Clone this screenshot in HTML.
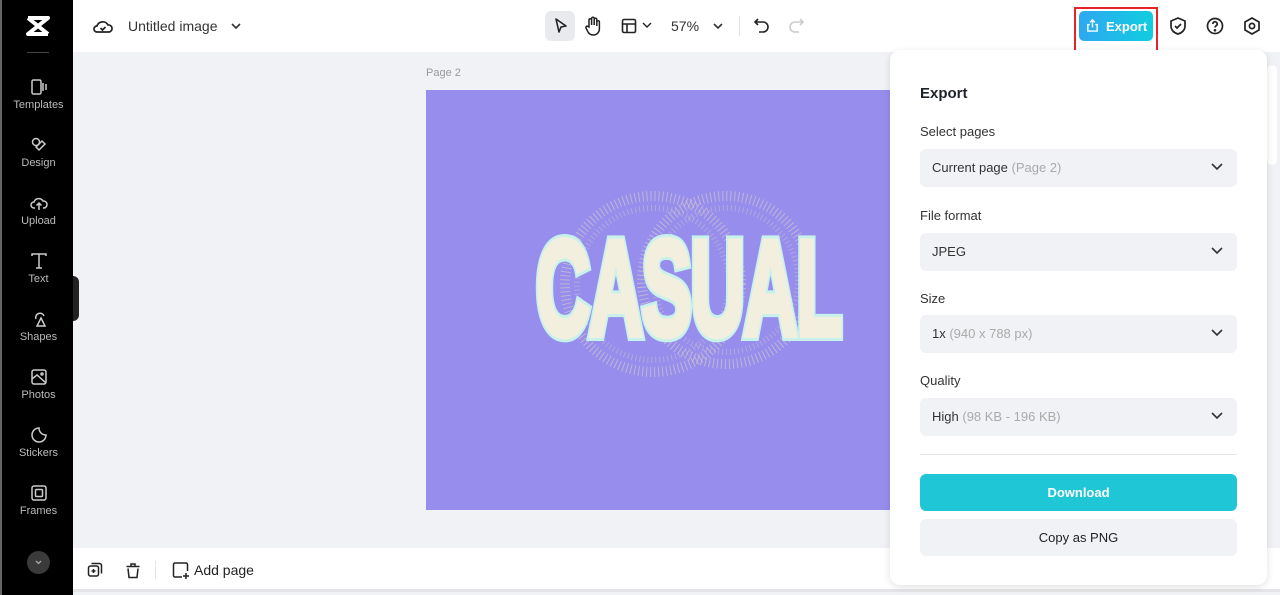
<!DOCTYPE html>
<html><head><meta charset="utf-8"><style>
*{margin:0;padding:0;box-sizing:border-box}
body{width:1280px;height:595px;overflow:hidden;background:#f0f2f5;font-family:"Liberation Sans",sans-serif;position:relative;color:#1f2329}
.abs{position:absolute}
.side{left:0;top:0;width:73px;height:595px;background:#000;border-left:2px solid #666}
.side .it{position:absolute;left:0;width:73px;text-align:center;color:#bbb;font-size:11px}
.side svg{display:block;margin:0 auto 3px}
.top{left:73px;top:0;width:1207px;height:52px;background:#fff}
.bot{left:73px;top:548px;width:1207px;height:44px;background:#fff;border-bottom:3px solid #e3e5e8}
.panel{left:890px;top:50px;width:377px;height:535px;background:#fff;border-radius:10px;box-shadow:0 2px 8px rgba(0,0,0,.12)}
.lbl{position:absolute;left:30px;font-size:13px;color:#333}
.sel{position:absolute;left:30px;width:317px;height:38px;background:#f0f2f5;border-radius:6px;font-size:13px;color:#333;padding:11px 12px}
.sel i{font-style:normal;color:#aaa}
.sel svg{position:absolute;right:14px;top:13px}
.cas{position:absolute;left:110px;top:130px;white-space:nowrap;font-family:'Liberation Sans',sans-serif;font-weight:bold;font-size:136px;line-height:136px;transform:scaleX(0.55);transform-origin:left top;letter-spacing:-2px}
</style></head><body>
<div class="abs side">
 <svg class="abs" style="left:23px;top:15px" width="26" height="22" viewBox="0 0 26 22"><path d="M3 3h20L3 19h20M3 3l20 16" stroke="#fff" stroke-width="4" fill="none" stroke-linejoin="round"/></svg>
 <div class="abs" style="left:25px;top:52px;width:22px;height:1px;background:#444"></div>
 <div class="it" style="top:78px"><svg width="18" height="18" viewBox="0 0 18 18" fill="none" stroke="#ccc" stroke-width="1.5"><rect x="2" y="2" width="9" height="14" rx="1.5"/><path d="M13 5v8M16 6v6"/></svg>Templates</div>
 <div class="it" style="top:136px"><svg width="18" height="18" viewBox="0 0 18 18" fill="none" stroke="#ccc" stroke-width="1.5"><circle cx="6" cy="6" r="3.5"/><path d="M9 14l6-6-3-3-6 6z"/></svg>Design</div>
 <div class="it" style="top:194px"><svg width="18" height="18" viewBox="0 0 18 18" fill="none" stroke="#ccc" stroke-width="1.5"><path d="M5 14H4a3 3 0 010-6 5 5 0 019-1 3.5 3.5 0 011 7h-1M9 9v7M6.5 11.5L9 9l2.5 2.5"/></svg>Upload</div>
 <div class="it" style="top:252px"><svg width="18" height="18" viewBox="0 0 18 18" fill="none" stroke="#ccc" stroke-width="1.5"><path d="M2 4V2h14v2M9 2v14M6 16h6"/></svg>Text</div>
 <div class="it" style="top:310px"><svg width="18" height="18" viewBox="0 0 18 18" fill="none" stroke="#ccc" stroke-width="1.5"><path d="M6 9a4 4 0 118-3M11 8l4 8H7z"/></svg>Shapes</div>
 <div class="it" style="top:368px"><svg width="18" height="18" viewBox="0 0 18 18" fill="none" stroke="#ccc" stroke-width="1.5"><rect x="2" y="2" width="14" height="14" rx="2"/><path d="M2 11l5-4 9 8"/><circle cx="12" cy="6" r="1"/></svg>Photos</div>
 <div class="it" style="top:426px"><svg width="18" height="18" viewBox="0 0 18 18" fill="none" stroke="#ccc" stroke-width="1.5"><path d="M16 9a7 7 0 11-7-7c0 4 3 7 7 7z"/></svg>Stickers</div>
 <div class="it" style="top:484px"><svg width="18" height="18" viewBox="0 0 18 18" fill="none" stroke="#ccc" stroke-width="1.5"><rect x="2" y="2" width="14" height="14" rx="2"/><rect x="5.5" y="5.5" width="7" height="7" rx="1"/></svg>Frames</div>
 <div class="abs" style="left:25px;top:551px;width:23px;height:23px;border-radius:50%;background:#3a3a3a"><svg width="23" height="23" viewBox="0 0 23 23"><path d="M9 10l2.5 2.5L14 10" stroke="#aaa" fill="none" stroke-width="1.3"/></svg></div>
</div>
<div class="abs" style="left:73px;top:276px;width:6px;height:45px;background:#222;border-radius:0 6px 6px 0"></div>
<div class="abs top">
 <svg class="abs" style="left:20px;top:17px" width="20" height="18" viewBox="0 0 20 18" fill="none" stroke="#222" stroke-width="1.7"><path d="M5 15H4a3 3 0 010-6 6 6 0 0111-1 3.5 3.5 0 011 7z"/><path d="M7.5 11l2 2 3-3"/></svg>
 <div class="abs" style="left:55px;top:18px;font-size:14px;color:#333">Untitled image</div>
 <svg class="abs" style="left:157px;top:21px" width="12" height="10"><path d="M2 3l4 4 4-4" stroke="#333" fill="none" stroke-width="1.6"/></svg>
 <div class="abs" style="left:472px;top:11px;width:30px;height:30px;background:#e8eaed;border-radius:6px"></div>
 <svg class="abs" style="left:479px;top:17px" width="18" height="18" viewBox="0 0 18 18"><path d="M4 2l10 7-5 1-2 5z" stroke="#222" fill="none" stroke-width="1.6" stroke-linejoin="round"/></svg>
 <svg class="abs" style="left:511px;top:16px" width="18" height="20" viewBox="0 0 18 20" fill="none" stroke="#222" stroke-width="1.5"><path d="M5 11V4a1.3 1.3 0 012.6 0v5V2.5a1.3 1.3 0 012.6 0V9V3.5a1.3 1.3 0 012.6 0V10V6a1.3 1.3 0 012.6 0v7a6 6 0 01-6 6H9a6 6 0 01-5-3l-2-4a1.3 1.3 0 012-1.5z"/></svg>
 <svg class="abs" style="left:548px;top:18px" width="16" height="16" viewBox="0 0 16 16" fill="none" stroke="#222" stroke-width="1.6"><rect x="1.5" y="1.5" width="13" height="13" rx="1.5"/><path d="M1.5 6h13M6 6v8.5"/></svg>
 <svg class="abs" style="left:569px;top:21px" width="10" height="8"><path d="M1 2l4 4 4-4" stroke="#222" fill="none" stroke-width="1.4"/></svg>
 <div class="abs" style="left:598px;top:18px;font-size:14px;color:#333">57%</div>
 <svg class="abs" style="left:639px;top:21px" width="12" height="10"><path d="M2 3l4 4 4-4" stroke="#333" fill="none" stroke-width="1.6"/></svg>
 <div class="abs" style="left:666px;top:16px;width:1px;height:20px;background:#e3e5e8"></div>
 <svg class="abs" style="left:680px;top:17px" width="18" height="18" viewBox="0 0 18 18" fill="none" stroke="#222" stroke-width="1.6"><path d="M5 2L2 5l3 3M2 5h8a5 5 0 010 10H6"/></svg>
 <svg class="abs" style="left:714px;top:17px" width="18" height="18" viewBox="0 0 18 18" fill="none" stroke="#ccc" stroke-width="1.6"><path d="M13 2l3 3-3 3M16 5H8a5 5 0 000 10h4"/></svg>
 <div class="abs" style="left:1001px;top:7px;width:84px;height:47px;border:2px solid #e8222a"></div>
 <div class="abs" style="left:1006px;top:11px;width:74px;height:30px;border-radius:5px;background:linear-gradient(90deg,#2fa8f0,#10cde0);color:#fff;font-size:13px;font-weight:bold;padding:8px 0 0 27px">Export</div>
 <svg class="abs" style="left:1013px;top:19px" width="13" height="13" viewBox="0 0 14 14" fill="none" stroke="#fff" stroke-width="1.5"><path d="M4 6H2v7h10V6h-2M7 9V1M4.5 3.5L7 1l2.5 2.5"/></svg>
 <svg class="abs" style="left:1096px;top:16px" width="18" height="20" viewBox="0 0 18 20" fill="none" stroke="#222" stroke-width="1.7"><path d="M9 2l7 3v5c0 4-3 7-7 8-4-1-7-4-7-8V5z"/><path d="M6 10l2 2 4-4"/></svg>
 <svg class="abs" style="left:1133px;top:17px" width="18" height="18" viewBox="0 0 18 18" fill="none" stroke="#222" stroke-width="1.7"><circle cx="9" cy="9" r="7.5"/><path d="M6.8 7a2.2 2.2 0 114 1.2c-1 .8-1.8 1-1.8 2.3"/><circle cx="9" cy="13.3" r=".5" fill="#222"/></svg>
 <svg class="abs" style="left:1170px;top:16px" width="18" height="20" viewBox="0 0 18 20" fill="none" stroke="#222" stroke-width="1.7"><path d="M9 2l7 4v8l-7 4-7-4V6z"/><circle cx="9" cy="10" r="2.6"/></svg>
</div>
<svg class="abs" style="left:1030px;top:54px" width="44" height="24"><path d="M3 21L40 3M40 3l-9 1M40 3l-4 8" stroke="#e8222a" stroke-width="2" fill="none"/></svg>
<div class="abs" style="left:426px;top:67px;font-size:11px;color:#999">Page 2</div>
<div class="abs" style="left:426px;top:90px;width:464px;height:420px;background:#978ded;overflow:hidden">
 <svg class="abs" style="left:0;top:0" width="464" height="420" fill="none">
  <circle cx="227" cy="194" r="88" stroke="#d8d0c8" stroke-width="10" stroke-dasharray="1 3" opacity=".6"/>
  <circle cx="227" cy="194" r="76" stroke="#d8d0c8" stroke-width="6" stroke-dasharray="1 3" opacity=".4"/>
  <circle cx="300" cy="190" r="84" stroke="#d8d0c8" stroke-width="10" stroke-dasharray="1 3" opacity=".6"/>
  <circle cx="300" cy="190" r="72" stroke="#d8d0c8" stroke-width="6" stroke-dasharray="1 3" opacity=".4"/>
 </svg>
 <div class="cas" style="color:#c7f1ea;-webkit-text-stroke:12px #c7f1ea">CASUAL</div>
 <div class="cas" style="color:#f3efdf;-webkit-text-stroke:6px #f3efdf">CASUAL</div>
</div>
<div class="abs" style="left:1267px;top:65px;width:10px;height:100px;background:#fff;border-radius:6px"></div>
<div class="abs bot">
 <svg class="abs" style="left:14px;top:14px" width="16" height="16" viewBox="0 0 16 16" fill="none" stroke="#222" stroke-width="1.5"><rect x="1.5" y="4" width="10" height="10" rx="2"/><path d="M4.5 1.5h8a2 2 0 012 2v8M6.5 7v4M4.5 9h4"/></svg>
 <svg class="abs" style="left:52px;top:14px" width="16" height="17" viewBox="0 0 16 17" fill="none" stroke="#222" stroke-width="1.5"><path d="M1.5 4.5h13M6 4.5V2h4v2.5M3 6.5l1 9h8l1-9"/></svg>
 <div class="abs" style="left:82px;top:13px;width:1px;height:18px;background:#e3e5e8"></div>
 <svg class="abs" style="left:99px;top:14px" width="18" height="18" viewBox="0 0 18 18" fill="none" stroke="#222" stroke-width="1.5"><path d="M10 15H3a1.5 1.5 0 01-1.5-1.5v-11A1.5 1.5 0 013 1h11a1.5 1.5 0 011.5 1.5V9M14 11v6M11 14h6"/></svg>
 <div class="abs" style="left:121px;top:14px;font-size:14px;color:#222">Add page</div>
</div>
<div class="abs panel">
 <div class="abs" style="left:30px;top:35px;font-size:15px;font-weight:bold">Export</div>
 <div class="lbl" style="top:74px">Select pages</div>
 <div class="sel" style="top:99px">Current page <i>(Page 2)</i><svg width="12" height="10"><path d="M1 2l5 5 5-5" stroke="#333" fill="none" stroke-width="1.6"/></svg></div>
 <div class="lbl" style="top:158px">File format</div>
 <div class="sel" style="top:183px">JPEG<svg width="12" height="10"><path d="M1 2l5 5 5-5" stroke="#333" fill="none" stroke-width="1.6"/></svg></div>
 <div class="lbl" style="top:241px">Size</div>
 <div class="sel" style="top:265px">1x <i>(940 x 788 px)</i><svg width="12" height="10"><path d="M1 2l5 5 5-5" stroke="#333" fill="none" stroke-width="1.6"/></svg></div>
 <div class="lbl" style="top:323px">Quality</div>
 <div class="sel" style="top:348px">High <i>(98 KB - 196 KB)</i><svg width="12" height="10"><path d="M1 2l5 5 5-5" stroke="#333" fill="none" stroke-width="1.6"/></svg></div>
 <div class="abs" style="left:30px;top:404px;width:317px;height:1px;background:#e3e5e8"></div>
 <div class="abs" style="left:30px;top:424px;width:317px;height:37px;background:#1fc6d6;border-radius:6px;color:#fff;font-size:13px;font-weight:bold;text-align:center;line-height:37px">Download</div>
 <div class="abs" style="left:30px;top:469px;width:317px;height:37px;background:#f0f2f5;border-radius:6px;color:#222;font-size:13px;text-align:center;line-height:37px">Copy as PNG</div>
</div>
</body></html>
